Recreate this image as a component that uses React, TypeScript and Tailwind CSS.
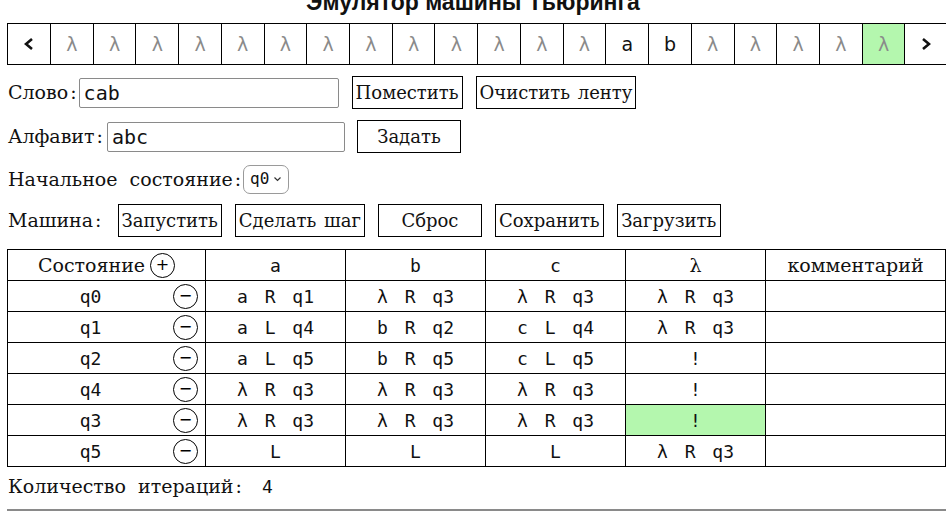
import React from 'react';

const tape = ['λ', 'λ', 'λ', 'λ', 'λ', 'λ', 'λ', 'λ', 'λ', 'λ', 'λ', 'λ', 'λ', 'a', 'b', 'λ', 'λ', 'λ', 'λ', 'λ'];
const headPos = 19;

const symbols = ['a', 'b', 'c', 'λ'];

const rows = [
  { state: 'q0', cells: ['a R q1', 'λ R q3', 'λ R q3', 'λ R q3'] },
  { state: 'q1', cells: ['a L q4', 'b R q2', 'c L q4', 'λ R q3'] },
  { state: 'q2', cells: ['a L q5', 'b R q5', 'c L q5', '!'] },
  { state: 'q4', cells: ['λ R q3', 'λ R q3', 'λ R q3', '!'] },
  { state: 'q3', cells: ['λ R q3', 'λ R q3', 'λ R q3', '!'] },
  { state: 'q5', cells: ['L', 'L', 'L', 'λ R q3'] },
];

// current state q3 reads λ
const active = { row: 4, col: 3 };

function Chevron({ dir }: { dir: 'left' | 'right' }) {
  return (
    <svg width="10" height="14" viewBox="0 0 10 14">
      <polyline
        points={dir === 'left' ? '8,2 2,7 8,12' : '2,2 8,7 2,12'}
        fill="none"
        stroke="#111"
        strokeWidth="2.6"
        strokeLinejoin="miter"
      />
    </svg>
  );
}

function RoundBtn({ sign }: { sign: '+' | '−' }) {
  return (
    <span className="inline-flex h-[25px] w-[25px] items-center justify-center rounded-full border border-black font-['DejaVu_Sans',sans-serif] text-[16px] leading-none text-black">
      {sign}
    </span>
  );
}

function Btn({ children }: { children: React.ReactNode }) {
  return (
    <button className="h-[33px] min-w-[104px] border border-black bg-white px-[3px] text-[18px] leading-none text-[#111] [word-spacing:2px]">
      {children}
    </button>
  );
}

function Label({ text }: { text: string }) {
  return (
    <span className="text-[19px]">
      {text}
      <span className="ml-[2px]">:</span>
    </span>
  );
}

function App() {
  return (
    <div className="h-[511px] w-[946px] overflow-hidden bg-white font-['DejaVu_Serif',serif] text-[#111] [word-spacing:6px]">
      {/* Title */}
      <h1 className="-mt-[12px] h-[35px] text-center font-['Liberation_Sans',sans-serif] text-[23px] font-bold leading-[28px] [word-spacing:0px]">
        Эмулятор машины Тьюринга
      </h1>

      {/* Tape */}
      <div className="ml-[7px] flex h-[42px] w-[941px] border-y border-black font-['DejaVu_Sans',sans-serif] text-[19px]">
        <div className="flex w-[43px] shrink-0 items-center justify-center border-l border-black">
          <Chevron dir="left" />
        </div>
        {tape.map((s, i) => (
          <div
            key={i}
            className={`flex flex-1 items-center justify-center border-l border-black ${
              i === headPos ? 'bg-[#b4f7ae]' : ''
            } ${s === 'λ' ? 'text-[#8a8a8a]' : 'text-[#111]'}`}
          >
            {s}
          </div>
        ))}
        <div className="flex flex-1 items-center justify-center border-x border-black">
          <Chevron dir="right" />
        </div>
      </div>

      <div className="px-[8px]">
        {/* Word */}
        <div className="mt-[11px] flex h-[33px] items-center">
          <Label text="Слово" />
          <input
            readOnly
            value="cab"
            className="ml-[2px] h-[30px] w-[260px] rounded-[2px] border border-[#8a8a8a] px-[4px] font-['DejaVu_Sans_Mono',monospace] text-[20px] text-[#111] outline-none"
          />
          <div className="ml-[13px]">
            <Btn>Поместить</Btn>
          </div>
          <div className="ml-[13px]">
            <Btn>Очистить ленту</Btn>
          </div>
        </div>

        {/* Alphabet */}
        <div className="mt-[11px] flex h-[33px] items-center">
          <Label text="Алфавит" />
          <input
            readOnly
            value="abc"
            className="ml-[4px] h-[30px] w-[238px] rounded-[2px] border border-[#8a8a8a] px-[4px] font-['DejaVu_Sans_Mono',monospace] text-[20px] text-[#111] outline-none"
          />
          <div className="ml-[12px]">
            <Btn>Задать</Btn>
          </div>
        </div>

        {/* Initial state */}
        <div className="mt-[11px] flex h-[30px] items-center">
          <Label text="Начальное состояние" />
          <span className="ml-[2px] inline-flex h-[29px] w-[46px] items-center justify-center gap-[4px] rounded-[7px] border border-[#9a9a9a] font-['DejaVu_Sans_Mono',monospace] text-[16px] [word-spacing:0px]">
            q0
            <svg width="9" height="6" viewBox="0 0 9 6">
              <polyline points="1.5,1.5 4.5,4.5 7.5,1.5" fill="none" stroke="#333" strokeWidth="1.2" />
            </svg>
          </span>
        </div>

        {/* Machine */}
        <div className="mt-[10px] flex h-[33px] items-center gap-[13px]">
          <span className="mr-[3px]">
            <Label text="Машина" />
          </span>
          <Btn>Запустить</Btn>
          <Btn>Сделать шаг</Btn>
          <Btn>Сброс</Btn>
          <Btn>Сохранить</Btn>
          <Btn>Загрузить</Btn>
        </div>
      </div>

      {/* Rules table */}
      <table className="ml-[7px] mt-[12px] w-[939px] table-fixed border-collapse text-[19px]">
        <colgroup>
          <col className="w-[198px]" />
          <col className="w-[140px]" />
          <col className="w-[140px]" />
          <col className="w-[140px]" />
          <col className="w-[140px]" />
          <col />
        </colgroup>
        <thead>
          <tr className="h-[31px]">
            <th className="border border-black p-0 font-normal">
              <div className="flex items-center justify-center gap-[5px]">
                <span>Состояние</span>
                <RoundBtn sign="+" />
              </div>
            </th>
            {symbols.map((s) => (
              <th
                key={s}
                className={`border border-black p-0 font-normal ${
                  s === 'λ' ? '' : "font-['DejaVu_Sans_Mono',monospace] text-[18px]"
                }`}
              >
                {s}
              </th>
            ))}
            <th className="border border-black p-0 font-normal">комментарий</th>
          </tr>
        </thead>
        <tbody className="font-['DejaVu_Sans_Mono',monospace] text-[18px]">
          {rows.map((r, ri) => (
            <tr key={r.state} className="h-[31px]">
              <td className="border border-black p-0">
                <div className="flex items-center pr-[7px]">
                  <span className="flex-1 text-center">{r.state}</span>
                  <RoundBtn sign="−" />
                </div>
              </td>
              {r.cells.map((c, ci) => (
                <td
                  key={ci}
                  className={`border border-black p-0 text-center ${
                    active.row === ri && active.col === ci ? 'bg-[#b4f7ae]' : ''
                  }`}
                >
                  {c}
                </td>
              ))}
              <td className="border border-black p-0"></td>
            </tr>
          ))}
        </tbody>
      </table>

      {/* Iterations */}
      <div className="ml-[8px] mt-[6px] flex h-[26px] items-center">
        <Label text="Количество итераций" />
        <span className="ml-[20px] font-['DejaVu_Sans_Mono',monospace] text-[18px]">4</span>
      </div>

      <hr className="ml-[7px] mt-[10px] border-t-2 border-[#8a8a8a]" />
    </div>
  );
}

export default App;
